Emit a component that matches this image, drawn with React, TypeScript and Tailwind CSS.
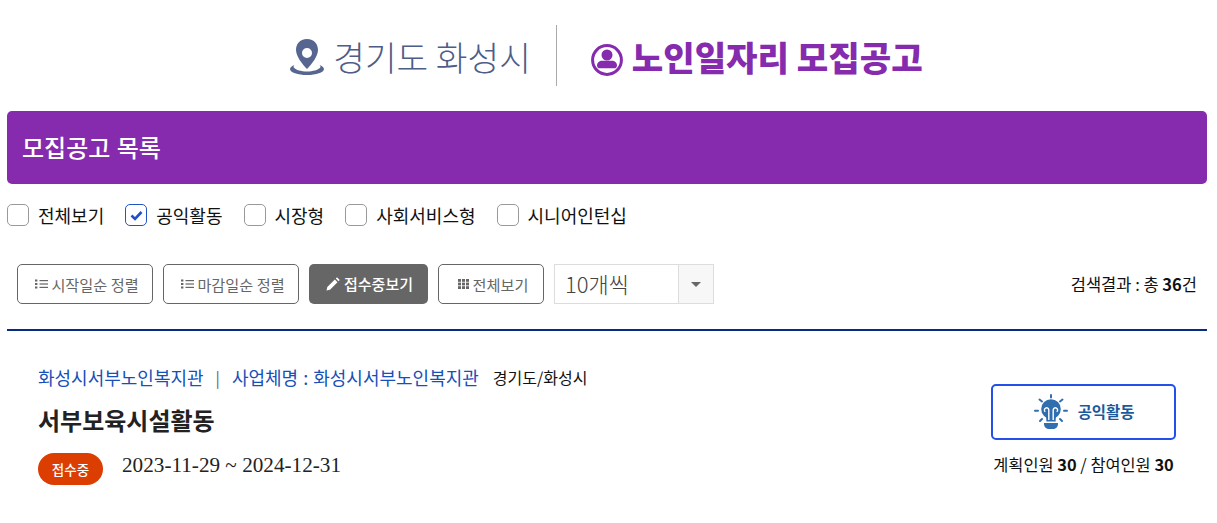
const font = { fontFamily: '"Noto Sans CJK KR", "Noto Sans", sans-serif' };

function Check({ label, checked }: { label: string; checked?: boolean }) {
  return (
    <label className="flex items-center gap-[9px]">
      <span className={`flex h-[22px] w-[22px] items-center justify-center rounded-[5px] bg-white ${checked ? 'border-[1.5px] border-[#1f55c5]' : 'border border-[#999999]'}`}>
        {checked && (
          <svg width="13" height="11" viewBox="0 0 13 11">
            <path d="M1.500 5.500l3.500 3.500 6.500-7" fill="none" stroke="#2250c8" strokeWidth="2.600" />
          </svg>
        )}
      </span>
      <span className="text-[18px] leading-6 text-[#111111]">{label}</span>
    </label>
  );
}

function ListIcon() {
  return (
    <svg width="13" height="10" viewBox="0 0 13 10" fill="#666666">
      <rect x="0" y="0.500" width="2.400" height="2" />
      <rect x="0" y="4" width="2.400" height="2" />
      <rect x="0" y="7.500" width="2.400" height="2" />
      <rect x="4.500" y="1" width="8.500" height="1.200" />
      <rect x="4.500" y="4.400" width="8.500" height="1.200" />
      <rect x="4.500" y="7.800" width="8.500" height="1.200" />
    </svg>
  );
}

function GridIcon() {
  return (
    <svg width="11" height="10" viewBox="0 0 11 10" fill="#666666">
      {[0, 3.600, 7.200].flatMap((y) =>
        [0, 4, 8].map((x) => <rect key={`${x}-${y}`} x={x} y={y} width="3" height="2.800" />)
      )}
    </svg>
  );
}

function OutlineButton({ w, icon, label, gap }: { w: string; icon: React.ReactNode; label: string; gap: string }) {
  return (
    <button className={`flex h-10 ${w} items-center justify-center ${gap} rounded-[5px] border border-[#666666] bg-white pl-[4px] text-[15.200px] text-[#666666]`}>
      {icon}
      <span>{label}</span>
    </button>
  );
}

export default function App() {
  return (
    <div className="min-h-[523px] w-full overflow-hidden bg-white" style={font}>
      <div className="ml-[7px] w-[1200px]">
        <header className="flex h-[111px] items-start justify-center pt-[25px] pr-[1px]">
          <div className="flex h-[61px] items-center">
            <div className="flex items-center gap-[8px] pr-[25px]">
              <svg className="mt-[3px]" width="35" height="36" viewBox="0 0 35 36">
                <path d="M4.500 26C2 27 0 28.500 0 30 0 33.500 8 36 17 36S34 33.500 34 30c0-1.500-2-3-4.500-4 1 1 1.500 1.800 .5 2.800C28 31 23 32.500 17 32.500S6 31 4 28.800C3 27.800 3.500 27 4.500 26z" fill="#566690" />
                <path fillRule="evenodd" clipRule="evenodd" d="M17 0C9.500 0 6 5.500 6 11 6 17 12 25 17 30 22 25 28 17 28 11 28 5.500 24.500 0 17 0zm0 9a5 5 0 1 1 0 10 5 5 0 0 1 0-10z" fill="#566690" />
              </svg>
              <span className="text-[34.400px] leading-[48px] font-light text-[#4d5d88]">경기도 화성시</span>
            </div>
            <div className="h-[61px] w-px bg-[#aaaaaa]" />
            <div className="flex items-center gap-[9px] pl-[34px]">
              <svg className="mt-[9px]" width="32" height="32" viewBox="0 0 32 32">
                <circle cx="16" cy="16" r="14.400" fill="none" stroke="#862bad" strokeWidth="3" />
                <circle cx="16" cy="11" r="5.500" fill="#862bad" />
                <path d="M6 21.500c0-3 2.500-4.800 5-4.800h10c2.500 0 5 1.800 5 4.800 0 2-1.500 2.800-3 2.800H9c-1.500 0-3-.8-3-2.800z" fill="#862bad" />
              </svg>
              <span className="text-[34.200px] leading-[48px] font-black text-[#862bad]">노인일자리 모집공고</span>
            </div>
          </div>
        </header>

        <div className="flex h-[73px] items-center rounded-[5px] bg-[#862bad] pb-[1px] pl-[15px] text-[24px] font-medium [word-spacing:1px] text-white">
          모집공고 목록
        </div>

        <div className="flex h-[62px] items-center gap-[21px]">
          <Check label="전체보기" />
          <Check label="공익활동" checked />
          <Check label="시장형" />
          <Check label="사회서비스형" />
          <Check label="시니어인턴십" />
        </div>

        <div className="mt-[18px] flex h-[40px] items-center gap-[10px] pr-[10px] pl-[10px]">
          <OutlineButton w="w-[136px]" gap="gap-[3px]" icon={<ListIcon />} label="시작일순 정렬" />
          <OutlineButton w="w-[136px]" gap="gap-[3px]" icon={<ListIcon />} label="마감일순 정렬" />
          <button className="flex h-10 w-[119px] items-center justify-center gap-[4px] rounded-[5px] bg-[#666666] pl-[2px] text-[15px] font-medium text-white">
            <svg width="14" height="14" viewBox="0 0 14 14" fill="#ffffff">
              <path d="M0.500 13.500l.8-3.500 7.500-7.500 2.700 2.700-7.500 7.500zM9.800 1.500l1.200-1.200 2.700 2.700-1.200 1.200z" />
            </svg>
            <span>접수중보기</span>
          </button>
          <OutlineButton w="w-[106px]" gap="gap-[4px]" icon={<GridIcon />} label="전체보기" />
          <div className="flex h-10 w-[160px] border border-[#dddddd]">
            <div className="flex-1 pl-[10px] text-[22px] leading-[36px] font-light text-[#444444]">10개씩</div>
            <div className="flex w-[35px] items-center justify-center border-l border-[#dddddd] bg-[#f7f7f7]">
              <span className="h-0 w-0 border-x-[5px] border-t-[5px] border-x-transparent border-t-[#666666]" />
            </div>
          </div>
          <div className="ml-auto text-[16.500px] text-[#111111]">
            검색결과 : 총 <b className="font-bold">36</b>건
          </div>
        </div>

        <div className="mt-[25px] h-[2px] bg-[#0b2a82]" />

        <div className="flex items-start justify-between pt-[33px] pr-[31px] pl-[31px]">
          <div>
            <div className="flex h-[26px] items-center text-[18px] [word-spacing:1px] text-[#1650b8]">
              <span>화성시서부노인복지관</span>
              <span className="mx-[12px] text-[16px] text-[#666666]">|</span>
              <span>사업체명 : 화성시서부노인복지관</span>
              <span className="ml-[14px] text-[16px] text-[#111111]">경기도/화성시</span>
            </div>
            <div className="mt-[14px] text-[24px] leading-[32px] font-bold text-[#222222]">서부보육시설활동</div>
            <div className="mt-[17px] flex items-center gap-[19px]">
              <span className="flex h-[32px] w-[65px] items-center justify-center rounded-[16px] bg-[#dc3d00] text-[13.500px] font-medium text-white">접수중</span>
              <span className="-mt-[6px] text-[21.200px] text-[#222222]" style={{ fontFamily: '"Liberation Serif", serif' }}>2023-11-29 ~ 2024-12-31</span>
            </div>
          </div>
          <div className="mt-[20px] flex flex-col items-center">
            <div className="flex h-[56px] w-[185px] items-center justify-center gap-[9px] rounded-[5px] border-2 border-[#2350e8]">
              <svg width="36" height="36" viewBox="0 0 36 36">
                <g stroke="#2f6fb0" strokeWidth="2" strokeLinecap="round">
                  <path d="M18 1v2.500M6.500 5.500l2.500 2M29.500 5.500l-2.500 2M2 16.700h3M31 16.700h3M7 27l2-2M29 27l-2-2" />
                </g>
                <circle cx="18" cy="15" r="9.800" fill="#2f6fb0" />
                <path d="M12 21h12c-1 1.500-1.300 3-1.300 4.500v2h-9.400v-2c0-1.500-.3-3-1.300-4.500z" fill="#2f6fb0" />
                <path d="M11 29h14v1c0 3-2.500 5-5 5h-4c-2.500 0-5-2-5-5z" fill="#2f6fb0" />
                <path d="M15.800 26v-10a2.200 2.200 0 1 0-3.500 1.800M20.200 26v-10a2.200 2.200 0 1 1 3.500 1.800" fill="none" stroke="#ffffff" strokeWidth="1.400" />
              </svg>
              <span className="text-[15.400px] font-bold text-[#1a5a9c]">공익활동</span>
            </div>
            <div className="mt-[12px] text-[16.400px] text-[#111111]">
              계획인원 <b className="font-bold">30</b> / 참여인원 <b className="font-bold">30</b>
            </div>
          </div>
        </div>
      </div>
    </div>
  );
}
